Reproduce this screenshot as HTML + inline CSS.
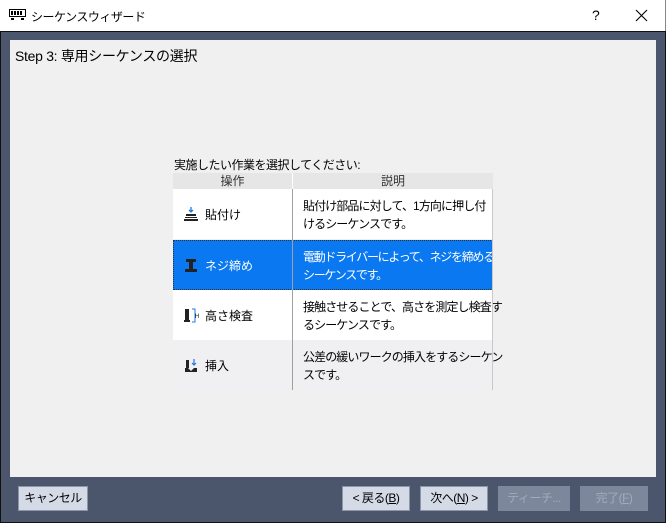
<!DOCTYPE html>
<html><head><meta charset="utf-8"><style>
body{margin:0;width:666px;height:523px;overflow:hidden;background:#fff;font-family:"Liberation Sans","Noto Sans CJK JP",sans-serif;font-size:12px;color:#000;position:relative}
.a{position:absolute}
.btn{position:absolute;top:486px;height:25px;background:#d4dbe7;border:1px solid #8c96a8;box-sizing:border-box;text-align:center;line-height:23px;font-size:12px;letter-spacing:-0.5px}
.dis{background:#7c879b;color:#a2abbb;border-color:#7c879b}
.row{position:absolute;left:173px;width:320px;height:50px}
.op{position:absolute;left:0;width:119px;height:50px;display:flex;align-items:center}
.op svg{margin-left:10px;margin-right:6px}
.ds{position:absolute;left:120px;top:8px;line-height:18px;padding-left:10px;letter-spacing:-0.9px;white-space:nowrap}
</style></head><body>
<div class="a" style="left:0;top:0;width:665px;height:31px;background:#fff;border-right:1px solid #888"></div>
<svg class="a" style="left:9px;top:9px" width="17" height="12" viewBox="0 0 17 12"><rect x="0.5" y="0.5" width="16" height="7" fill="none" stroke="#000"/><rect x="2" y="2" width="2" height="4" fill="#000"/><rect x="5" y="2" width="2" height="4" fill="#000"/><rect x="8" y="2" width="2" height="4" fill="#000"/><rect x="11" y="2" width="2" height="4" fill="#000"/><rect x="2" y="9" width="3" height="2" fill="#000"/><rect x="12" y="9" width="3" height="2" fill="#000"/></svg>
<div class="a" style="left:31px;top:8px;font-size:12px;letter-spacing:-0.5px">シーケンスウィザード</div>
<div class="a" style="left:592px;top:7px;font-size:14px">?</div>
<svg class="a" style="left:635px;top:9px" width="13" height="13" viewBox="0 0 13 13"><path d="M1 1L12 12M12 1L1 12" stroke="#000" stroke-width="1.1"/></svg>
<div class="a" style="left:0;top:31px;width:664px;height:490px;background:#4b566d;border:1px solid #111"></div>
<div class="a" style="left:10px;top:40px;width:646px;height:437px;background:#f0f0f0"></div>
<div class="a" style="left:15px;top:46px;font-size:14px;letter-spacing:-0.3px">Step 3: 専用シーケンスの選択</div>
<div class="a" style="left:174px;top:156px;letter-spacing:-0.5px">実施したい作業を選択してください:</div>
<div class="a" style="left:173px;top:173px;width:320px;height:16px;background:#e6e6e6"></div>
<div class="a" style="left:173px;top:173px;width:119px;height:16px;text-align:center;line-height:16px;color:#333;border-right:1px solid #fff">操作</div>
<div class="a" style="left:293px;top:173px;width:200px;height:16px;text-align:center;line-height:16px;color:#333">説明</div>

<div class="row" style="top:189px;background:#fff"><div class="op"><svg width="16" height="16" viewBox="0 0 16 16"><path d="M8 1v5M6 4l2 2 2-2" stroke="#1e78e0" fill="none" stroke-width="1.3"/><rect x="3" y="8" width="10" height="2" fill="#222"/><rect x="2" y="11" width="12" height="1" fill="#222"/><rect x="1" y="13" width="14" height="2" fill="#222"/></svg>貼付け</div><div class="ds">貼付け部品に対して、1方向に押し付<br>けるシーケンスです。</div></div>
<div class="row" style="top:240px;background:#0a78f0;color:#fff;height:50px;outline:1px dotted #333;outline-offset:-1px"><div class="op"><svg width="16" height="16" viewBox="0 0 16 16"><rect x="3" y="2" width="10" height="3" fill="#222"/><rect x="6" y="5" width="4" height="7" fill="#222"/><rect x="2" y="12" width="12" height="3" fill="#222"/></svg>ネジ締め</div><div class="ds" style="letter-spacing:-1.3px">電動ドライバーによって、ネジを締める<br>シーケンスです。</div></div>
<div class="row" style="top:290px;background:#fff"><div class="op"><svg width="16" height="16" viewBox="0 0 16 16"><rect x="2" y="2" width="4" height="11" fill="#222"/><rect x="1" y="13" width="6" height="2" fill="#222"/><path d="M9 2h3v13H9" stroke="#1e78e0" fill="none"/><text x="12" y="11" font-size="6" fill="#222">H</text></svg>高さ検査</div><div class="ds">接触させることで、高さを測定し検査す<br>るシーケンスです。</div></div>
<div class="row" style="top:340px;background:#f0f0f2"><div class="op"><svg width="16" height="16" viewBox="0 0 16 16"><rect x="3" y="3" width="3" height="8" fill="#222"/><path d="M11 2v6M9 6l2 2 2-2" stroke="#1e78e0" fill="none" stroke-width="1.2"/><path d="M2 11h3l3 3 3-3h3v4H2z" fill="#222"/></svg>挿入</div><div class="ds">公差の緩いワークの挿入をするシーケン<br>スです。</div></div>
<div class="a" style="left:292px;top:189px;width:1px;height:201px;background:#a0a0a0"></div>
<div class="a" style="left:492px;top:189px;width:1px;height:201px;background:#c8c8c8"></div>

<div class="btn" style="left:18px;width:70px">キャンセル</div>
<div class="btn" style="left:342px;width:68px">&lt; 戻る(<u>B</u>)</div>
<div class="btn" style="left:420px;width:68px">次へ(<u>N</u>) &gt;</div>
<div class="btn dis" style="left:498px;width:72px">ティーチ...</div>
<div class="btn dis" style="left:580px;width:68px">完了(<u>F</u>)</div>
</body></html>
